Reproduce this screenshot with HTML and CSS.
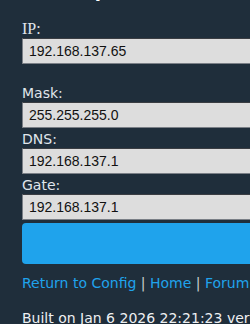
FILE: index.html
```html
<!DOCTYPE html>
<html lang="en">
<head>
  <meta charset="UTF-8">
  <title>Static IP</title>
  <link rel="stylesheet" href="styles.css">
</head>
<body>

<div class="cfg-wrap">
  <div class="cfg-title">IP Setup</div>

  <form class="cfg-form">
    <label class="cfg-label cfg-label-first" for="ip">IP:</label>
    <input class="cfg-input" id="ip" value="192.168.137.65">

    <div class="cfg-group">
      <label class="cfg-label" for="mask">Mask:</label>
      <input class="cfg-input" id="mask" value="255.255.255.0">
      <label class="cfg-label" for="dns">DNS:</label>
      <input class="cfg-input" id="dns" value="192.168.137.1">
      <label class="cfg-label" for="gate">Gate:</label>
      <input class="cfg-input" id="gate" value="192.168.137.1">
    </div>

    <button class="cfg-btn" type="submit">Save</button>
  </form>

  <div class="cfg-links">
    <a href="#">Return to Config</a> | <a href="#">Home</a> | <a href="#">Forum</a>
  </div>

  <div class="cfg-built">Built on Jan 6 2026 22:21:23 ver 1.0</div>
</div>

</body>
</html>
```

FILE: styles.css
```css
html {
  overflow: hidden;
}

body {
  margin: 0;
  background: #1f2e3b;
  color: #e8e8e8;
  font-family: 'DejaVu Sans', Verdana, sans-serif;
}

.cfg-wrap {
  width: 340px;
  padding-left: 22px;
}

.cfg-title {
  margin-top: -19px;
  font-size: 18px;
  font-weight: bold;
  line-height: 20px;
  color: #fff;
}

.cfg-form {
  display: flex;
  flex-direction: column;
  margin-top: 20px;
}

.cfg-label {
  font-size: 14px;
  line-height: 16px;
  color: #e0e6ec;
  margin-top: 3px;
  margin-bottom: 1px;
}

.cfg-label-first {
  font-family: 'Liberation Serif', serif;
  font-size: 16px;
  margin-top: 0;
}

.cfg-group {
  display: flex;
  flex-direction: column;
  margin-top: 18px;
}

.cfg-input {
  box-sizing: border-box;
  width: 100%;
  height: 26px;
  padding: 2px 6px;
  border: 1px solid #7a7f86;
  border-top-color: #3a3d42;
  background: #dddddd;
  color: #111;
  font-family: 'Liberation Sans', Arial, sans-serif;
  font-size: 14px;
}

.cfg-btn {
  height: 41px;
  margin-top: 3px;
  border: 0;
  border-radius: 4px;
  background: #1fa3ec;
  color: #1fa3ec;
  font-size: 16px;
}

.cfg-links {
  margin-top: 11px;
  font-size: 14px;
  line-height: 17px;
  color: #c8cdd2;
}

.cfg-links a {
  color: #1fa3ec;
  text-decoration: none;
}

.cfg-built {
  margin-top: 18px;
  font-size: 14px;
  line-height: 17px;
  color: #eef0f2;
}
```
